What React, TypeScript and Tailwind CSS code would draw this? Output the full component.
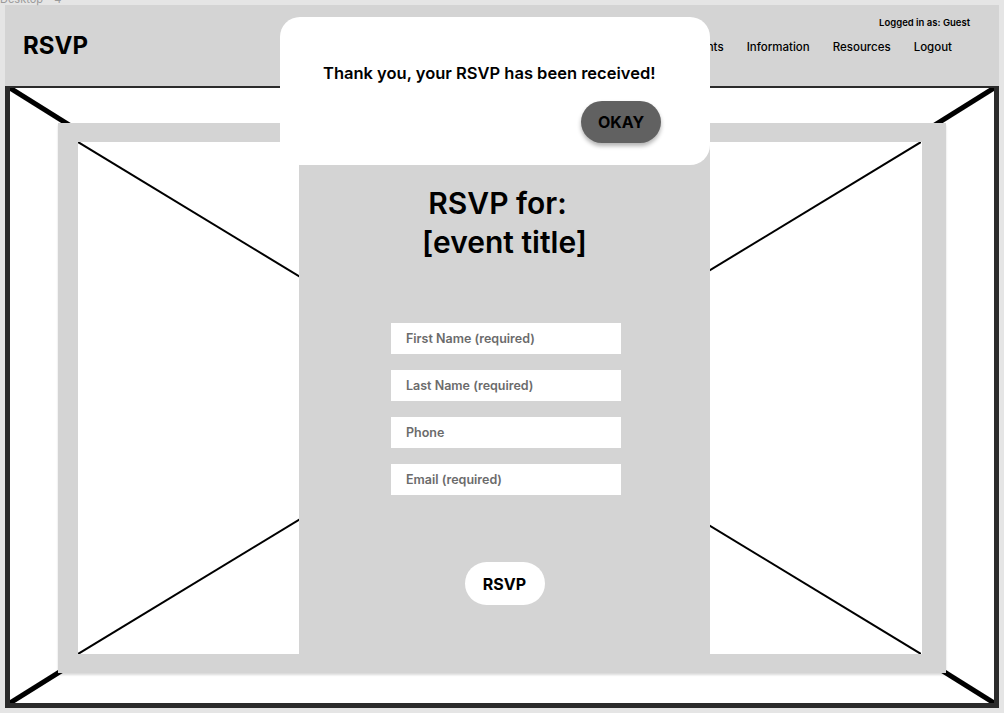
const NAV = ["Home", "Events", "Information", "Resources", "Logout"];
const FIELDS = ["First Name (required)", "Last Name (required)", "Phone", "Email (required)"];

function Header() {
  return (
    <header className="flex h-[83px] shrink-0 items-start justify-between border-b-2 border-[#2b2b2b] bg-[#d4d4d4]">
      <h1 className="pl-[18px] pt-[25px] text-[24px] font-bold leading-[32px] text-black">RSVP</h1>
      <div className="flex flex-col items-end pr-[29px] pt-[12px]">
        <p className="text-[9.5px] font-semibold leading-[12px] text-black">Logged in as: Guest</p>
        <nav className="mt-[10px] flex gap-[23px] pr-[18px]">
          {NAV.map((item) => (
            <a key={item} href="#" className="text-[11.5px] font-medium leading-[16px] text-black">
              {item}
            </a>
          ))}
        </nav>
      </div>
    </header>
  );
}

function RsvpPanel() {
  return (
    <section className="ml-[221px] flex h-full w-[411px] flex-col items-center bg-[#d4d4d4] pt-[42px]">
      <h2 className="text-center text-[30px] font-semibold leading-[39px] text-black">
        <span className="block pr-[14px]">RSVP for:</span>
        <span className="block">[event title]</span>
      </h2>
      <form className="ml-[3px] mt-[61px] flex flex-col gap-[16px]">
        {FIELDS.map((field) => (
          <input
            key={field}
            placeholder={field}
            className="h-[31px] w-[230px] bg-white px-[15px] text-[12.5px] font-semibold text-black outline-none placeholder:text-[#6b6b6b]"
          />
        ))}
      </form>
      <button className="mt-[67px] h-[43px] w-[80px] rounded-full bg-white text-[16px] font-bold text-black">
        RSVP
      </button>
    </section>
  );
}

export default function App() {
  return (
    <div
      className="relative h-[713px] w-[1004px] overflow-hidden bg-[#e5e5e5] p-[5px]"
      style={{ fontFamily: "Inter, 'Noto Sans', sans-serif" }}
    >
      <span className="absolute -top-[9px] left-0 text-[11px] text-[#9a9a9a]">Desktop - 4</span>

      <div className="flex h-full flex-col">
        <Header />

        <main className="relative flex-1 border-x-[5px] border-b-[5px] border-[#2b2b2b] bg-white">
          {/* placeholder image cross */}
          <svg className="absolute inset-0 h-full w-full" viewBox="0 0 983 615" preserveAspectRatio="none">
            <line x1="0" y1="0" x2="983" y2="615" stroke="#000" strokeWidth="5" />
            <line x1="983" y1="0" x2="0" y2="615" stroke="#000" strokeWidth="5" />
          </svg>

          <div className="relative mx-[48px] mt-[35px] h-[550px] bg-[#d4d4d4] py-[19px] pl-[20px] pr-[24px] shadow-[0_2px_2px_rgba(0,0,0,0.15)]">
            <div className="relative h-full bg-white">
              <svg className="absolute inset-0" width="843" height="512">
                <line x1="0" y1="0" x2="843" y2="512" stroke="#000" strokeWidth="2" />
                <line x1="843" y1="0" x2="0" y2="512" stroke="#000" strokeWidth="2" />
              </svg>
              <div className="relative h-full">
                <RsvpPanel />
              </div>
            </div>
          </div>
        </main>
      </div>

      {/* confirmation dialog */}
      <div className="absolute left-[280px] top-[17px] h-[148px] w-[430px] rounded-[20px] bg-white pl-[43px] pr-[49px] pt-[44px]">
        <p className="text-[16.5px] font-semibold leading-[24px] text-black">Thank you, your RSVP has been received!</p>
        <div className="mt-[16px] flex justify-end">
          <button className="h-[42px] w-[80px] rounded-full bg-[#616161] text-[16px] font-bold text-black shadow-[0_3px_4px_rgba(0,0,0,0.3)]">
            OKAY
          </button>
        </div>
      </div>
    </div>
  );
}
